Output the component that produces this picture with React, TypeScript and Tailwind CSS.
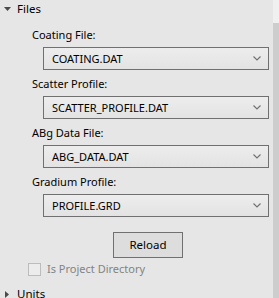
import React from "react";

const font = { fontFamily: '"Noto Sans", "Open Sans", sans-serif' };

function Combo({ value }: { value: string }) {
  return (
    <div className="ml-[43px] mr-[4px] h-[23px] border border-[#707070] bg-gradient-to-b from-[#ededed] to-[#e3e3e3] flex items-center pl-[8px] pr-[6px]">
      <span className="flex-1 text-[11px] leading-none text-black">{value}</span>
      <svg width="8" height="5" viewBox="0 0 8 5" className="mr-[1px]">
        <path d="M0.5 0.5 L4 4 L7.5 0.5" fill="none" stroke="#707070" strokeWidth="1.1" />
      </svg>
    </div>
  );
}

function Group({ label, value }: { label: string; value: string }) {
  return (
    <div className="block">
      <div className="h-[16px] ml-[32px] mb-[4px] flex items-center text-[11px] text-black">{label}</div>
      <Combo value={value} />
      <div className="h-[6px]" />
    </div>
  );
}

export default function App() {
  return (
    <div className="w-[279px] h-[298px] bg-[#e6e6e6] overflow-hidden flex" style={font}>
      <div className="flex-1 block">
        <div className="h-[16px] mt-[1px] flex items-center">
          <svg width="7" height="4" viewBox="0 0 7 4" className="ml-[4px] mr-[6px]">
            <path d="M0 0 L7 0 L3.5 4 Z" fill="#4a4a4a" />
          </svg>
          <span className="text-[11.5px] text-black">Files</span>
        </div>
        <div className="h-[10px]" />
        <Group label="Coating File:" value="COATING.DAT" />
        <Group label="Scatter Profile:" value="SCATTER_PROFILE.DAT" />
        <Group label="ABg Data File:" value="ABG_DATA.DAT" />
        <Group label="Gradium Profile:" value="PROFILE.GRD" />
        <div className="h-[9px]" />
        <div className="ml-[113px] w-[70px] h-[26px] border border-[#707070] bg-[#dddddd] flex items-center justify-center text-[11.5px] text-black">
          Reload
        </div>
        <div className="h-[5px]" />
        <div className="flex items-center h-[13px] ml-[28px]">
          <div className="w-[13px] h-[13px] border border-[#bcbcbc] bg-[#ececec]" />
          <span className="ml-[6px] text-[11px] text-[#838383]">Is Project Directory</span>
        </div>
        <div className="h-[10px]" />
        <div className="h-[16px] flex items-center">
          <svg width="4" height="7" viewBox="0 0 4 7" className="ml-[5px] mr-[8px]">
            <path d="M0 0 L4 3.5 L0 7 Z" fill="#4a4a4a" />
          </svg>
          <span className="text-[11.5px] text-black">Units</span>
        </div>
      </div>
      <div className="w-[6px] flex flex-col">
        <div className="h-[23px] bg-[#f0f0f0]" />
        <div className="flex-1 bg-[#cdcdcd]" />
      </div>
    </div>
  );
}
